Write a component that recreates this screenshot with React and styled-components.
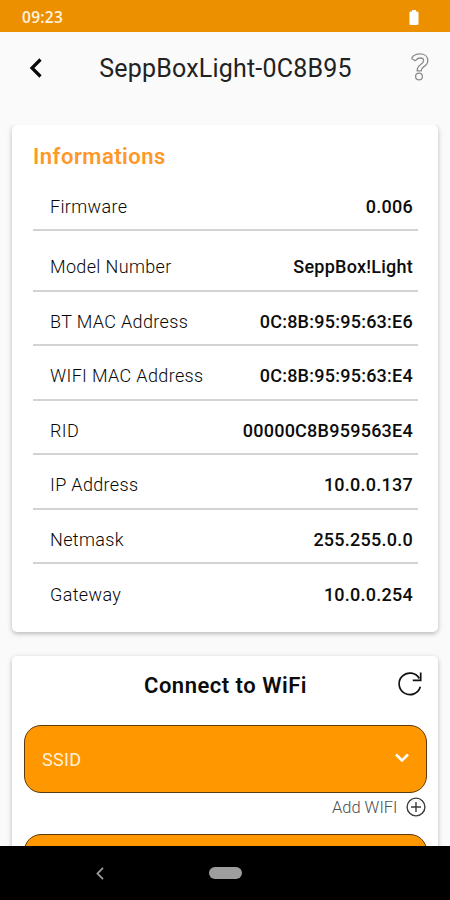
import React from 'react';
import styled, { createGlobalStyle } from 'styled-components';

const GlobalStyle = createGlobalStyle`
    * {
        box-sizing: border-box;
    }

    body {
        margin: 0;
        font-family: Roboto, 'Liberation Sans', sans-serif;
        color: #0c0c0c;
        overflow: hidden;
    }
`;

const Screen = styled.div`
    width: 450px;
    height: 900px;
    display: flex;
    flex-direction: column;
    background-color: #fafafa;
    overflow: hidden;
`;

const StatusBar = styled.div`
    height: 32px;
    flex-shrink: 0;
    display: flex;
    align-items: center;
    justify-content: space-between;
    padding: 2px 31px 0 22px;
    background-color: #ed9000;
    color: #fff3e0;

    svg {
        display: block;
    }
`;

const Clock = styled.span`
    font-family: 'Open Sans', Roboto, sans-serif;
    font-size: 15.5px;
    font-weight: 600;
    line-height: 20px;
    letter-spacing: 0.3px;
`;

const Header = styled.header`
    height: 92.5px;
    flex-shrink: 0;
    display: grid;
    grid-template-columns: 42px 1fr 42px;
    align-items: start;
    padding: 20px 9px 0 15px;

    svg {
        display: block;
    }
`;

const HeaderButton = styled.button`
    height: ${props => props.$height};
    padding: 0;
    border: none;
    background: none;
    display: flex;
    align-items: center;
    justify-content: center;
`;

const Title = styled.h1`
    margin: 0 5px 0 0;
    font-size: 25px;
    font-weight: 400;
    line-height: 33px;
    letter-spacing: 0.2px;
    text-align: center;
    white-space: nowrap;
    color: #222222;
`;

const Content = styled.main`
    flex: 1;
    min-height: 0;
    overflow: hidden;
    display: flex;
    flex-direction: column;
    gap: 24px;
    padding: 0 12px;
`;

const Card = styled.section`
    flex-shrink: 0;
    height: ${props => props.$height};
    padding: ${props => props.$padding};
    border-radius: 5px;
    background-color: #ffffff;
    box-shadow: 0 2px 4px rgba(0, 0, 0, 0.18), 0 1px 6px rgba(0, 0, 0, 0.1);
`;

const CardTitle = styled.h2`
    margin: 0;
    height: 32px;
    font-size: 22px;
    font-weight: 600;
    line-height: 26px;
    letter-spacing: 0.5px;
    color: #ff9826;
`;

const InfoRow = styled.div`
    height: ${props => props.$height || '54.6px'};
    display: flex;
    justify-content: space-between;
    align-items: flex-end;
    padding: 0 5px 11.5px 17px;
    border-bottom: 2px solid ${props => (props.$last ? 'transparent' : '#d3d3d3')};
    font-size: 18px;
    line-height: 22px;
    white-space: nowrap;
`;

const Label = styled.span`
    font-weight: 300;
    letter-spacing: 0.35px;
    color: #080808;
`;

const Value = styled.span`
    font-weight: 500;
    letter-spacing: 0.25px;
`;

const WifiHeader = styled.div`
    height: 38px;
    display: grid;
    grid-template-columns: 30px 1fr 30px;
    align-items: center;
    margin-bottom: 20px;

    svg {
        display: block;
        margin-top: -4px;
    }
`;

const WifiTitle = styled.h2`
    margin: 0;
    font-size: 22px;
    font-weight: 600;
    line-height: 26px;
    letter-spacing: 0.5px;
    text-align: center;
`;

const SelectBox = styled.button`
    width: 100%;
    height: 68px;
    display: flex;
    align-items: center;
    justify-content: space-between;
    padding: 0 17px;
    border: 1px solid #5b3a10;
    border-radius: 17px;
    background-color: #ff9800;
    color: #fff0d9;
    font-family: inherit;
    font-size: 18px;
    text-align: left;

    span {
        letter-spacing: 0.3px;
    }

    svg {
        margin-top: -3px;
    }
`;

const AddWifi = styled.div`
    height: 41px;
    display: flex;
    justify-content: flex-end;
    align-items: flex-start;
    gap: 8px;
    padding: 4px 1.5px 0 0;
    font-size: 16.5px;
    font-weight: 300;
    line-height: 21px;
    color: #4f4f4f;
`;

const NavBar = styled.nav`
    height: 54px;
    flex-shrink: 0;
    display: grid;
    grid-template-columns: 200px 50px 200px;
    align-items: center;
    justify-items: center;
    background-color: #000000;
`;

const HomePill = styled.div`
    width: 33px;
    height: 12px;
    border-radius: 6px;
    background-color: #9e9e9e;
`;

const infos = [
    { label: 'Firmware', value: '0.006', height: '55.5px' },
    { label: 'Model Number', value: 'SeppBox!Light', height: '60.5px' },
    { label: 'BT MAC Address', value: '0C:8B:95:95:63:E6' },
    { label: 'WIFI MAC Address', value: '0C:8B:95:95:63:E4' },
    { label: 'RID', value: '00000C8B959563E4' },
    { label: 'IP Address', value: '10.0.0.137' },
    { label: 'Netmask', value: '255.255.0.0' },
    { label: 'Gateway', value: '10.0.0.254' },
];

const BatteryIcon = () => (
    <svg width="10" height="15" viewBox="0 0 10 15" fill="#ffffff">
        <path d="M3 0h4v1.5h1.5q1 0 1 1V14q0 1-1 1h-7q-1 0-1-1V2.5q0-1 1-1H3z" />
    </svg>
);

const BackIcon = () => (
    <svg width="14" height="20" viewBox="0 0 14 20" fill="none" stroke="#0a0a0a" strokeWidth="3.2">
        <path d="M11.5 1.5 3 10l8.5 8.5" />
    </svg>
);

const HelpIcon = () => (
    <svg width="18" height="28" viewBox="0 0 18 28" fill="none" stroke="#8c8c8c" strokeWidth="1.3" strokeLinejoin="round">
        <path d="M1.2 4.2C3 2 5.8.9 9 .9c4.6 0 7.8 2.5 7.8 6.5 0 3-1.5 4.7-4.2 6.5-2 1.3-2.4 2-2.4 4H6.2c0-3.2 1-4.7 3.5-6.4 2.1-1.4 2.9-2.2 2.9-3.7 0-1.7-1.3-2.8-3.4-2.8-2.2 0-3.2.8-4.2 2.1-.5.7-1 .7-1.5.2L1.3 6q-.7-.7-.1-1.8z" />
        <circle cx="8" cy="23.5" r="3.4" />
    </svg>
);

const RefreshIcon = () => (
    <svg width="26" height="26" viewBox="0 0 26 26" fill="none" stroke="#111111" strokeWidth="1.7">
        <path d="M23.3 15.8A10.8 10.8 0 1 1 22.3 7.5" />
        <path d="M23.7 1.5V9.3H15.8" />
    </svg>
);

const ChevronDownIcon = () => (
    <svg width="14" height="10" viewBox="0 0 14 10" fill="none" stroke="#ffffff" strokeWidth="2.5">
        <path d="M1 1.5 7 7.5l6-6" />
    </svg>
);

const PlusIcon = () => (
    <svg width="20" height="20" viewBox="0 0 20 20" fill="none" stroke="#3c3c3c" strokeWidth="1.4">
        <circle cx="10" cy="10" r="8.9" />
        <path d="M10 5v10M5 10h10" />
    </svg>
);

const NavBackIcon = () => (
    <svg width="8" height="13" viewBox="0 0 8 13" fill="none" stroke="#9e9e9e" strokeWidth="1.8">
        <path d="M7 .8 1.5 6.5 7 12.2" />
    </svg>
);

const App = () => {
    return (
        <Screen>
            <GlobalStyle />
            <StatusBar>
                <Clock>09:23</Clock>
                <BatteryIcon />
            </StatusBar>
            <Header>
                <HeaderButton $height="32px" aria-label="Back"><BackIcon /></HeaderButton>
                <Title>SeppBoxLight-0C8B95</Title>
                <HeaderButton $height="29px" aria-label="Help"><HelpIcon /></HeaderButton>
            </Header>
            <Content>
                <Card $height="507px" $padding="19px 20px 0 21px">
                    <CardTitle>Informations</CardTitle>
                    <div>
                        {infos.map((info, index) => (
                            <InfoRow key={info.label} $height={info.height} $last={index === infos.length - 1}>
                                <Label>{info.label}</Label>
                                <Value>{info.value}</Value>
                            </InfoRow>
                        ))}
                    </div>
                </Card>
                <Card $height="300px" $padding="11.5px 11px 0 12px">
                    <WifiHeader>
                        <span />
                        <WifiTitle>Connect to WiFi</WifiTitle>
                        <RefreshIcon />
                    </WifiHeader>
                    <SelectBox>
                        <span>SSID</span>
                        <ChevronDownIcon />
                    </SelectBox>
                    <AddWifi>
                        <span>Add WIFI</span>
                        <PlusIcon />
                    </AddWifi>
                    <SelectBox />
                </Card>
            </Content>
            <NavBar>
                <NavBackIcon />
                <HomePill />
            </NavBar>
        </Screen>
    );
};

export default App;
